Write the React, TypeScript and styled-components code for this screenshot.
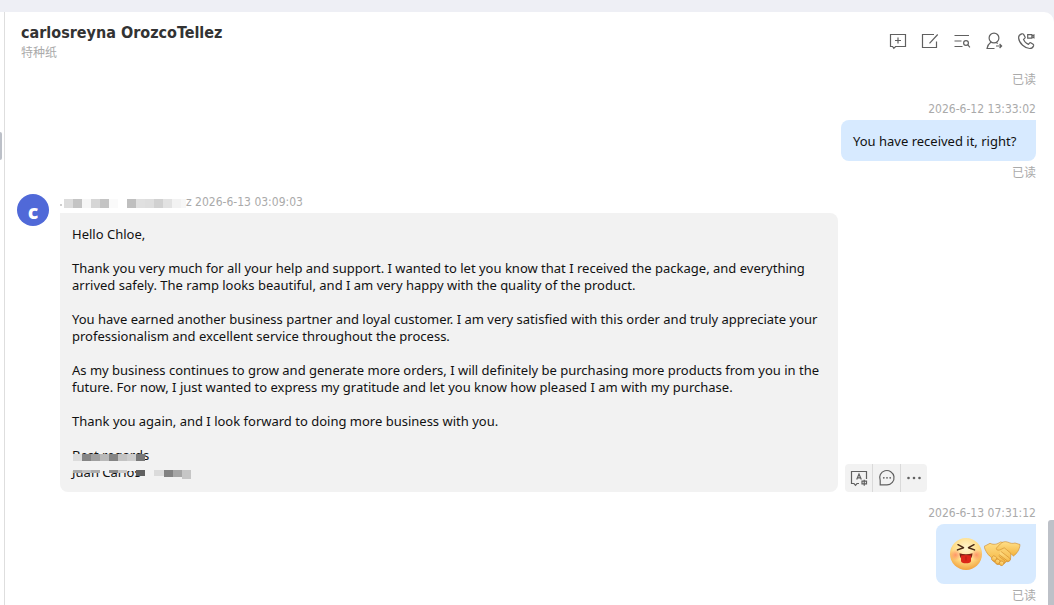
import React from "react";
import styled, { createGlobalStyle } from "styled-components";

const GlobalStyle = createGlobalStyle`
  *, *::before, *::after { box-sizing: border-box; }
  body {
    margin: 0;
    background: #eeeff5;
    font-family: "Noto Sans", "Noto Sans CJK SC", sans-serif;
    color: #111;
  }
  h1, p { margin: 0; }
  button { border: 0; padding: 0; background: none; font: inherit; color: inherit; cursor: pointer; }
`;

const Shell = styled.div`
  position: relative;
  height: 100vh;
  padding: 12px 0 0 4px;
  overflow: hidden;
`;

const SideEdge = styled.div`
  position: absolute;
  left: 0;
  top: 12px;
  bottom: 0;
  width: 4px;
  background: #fff;
`;

const SplitHandle = styled.div`
  position: absolute;
  left: 0;
  top: 132px;
  width: 2px;
  height: 28px;
  border-radius: 0 2px 2px 0;
  background: #bcc0c8;
`;

const ScrollThumb = styled.div`
  position: absolute;
  right: 0;
  top: 520px;
  bottom: 0;
  width: 6px;
  border-radius: 3px 0 0 0;
  background: #bdc1c8;
`;

const Panel = styled.main`
  height: 100%;
  display: flex;
  flex-direction: column;
  background: #fff;
  border-left: 1px solid #dedede;
  border-top-right-radius: 10px;
`;

const Header = styled.header`
  display: flex;
  justify-content: space-between;
  align-items: flex-start;
  height: 59px;
  flex: none;
  padding: 10px 18px 0 16px;
`;

const Title = styled.h1`
  font-family: "DejaVu Sans Condensed", "Noto Sans", sans-serif;
  font-size: 16px;
  line-height: 22px;
  font-weight: 700;
  color: #333;
`;

const Subtitle = styled.p`
  font-size: 12px;
  line-height: 18px;
  color: #aaa;
`;

const HeaderActions = styled.div`
  display: flex;
  gap: 12px;
  padding-top: 9px;
`;

const IconButton = styled.button`
  width: 20px;
  height: 20px;
  display: flex;
  align-items: center;
  justify-content: center;
`;

const Icon = styled.svg`
  display: block;
  fill: none;
  stroke: #606060;
  stroke-width: 1.2;
`;

const Feed = styled.section`
  flex: 1;
  padding: 0 18px 0 12px;
  display: flex;
  flex-direction: column;
`;

const Outgoing = styled.article`
  display: flex;
  flex-direction: column;
  align-items: flex-end;
  margin-top: 12px;
`;

const Stamp = styled.p`
  display: flex;
  font-family: "DejaVu Sans Condensed", "Noto Sans", sans-serif;
  font-size: 12px;
  line-height: 16px;
  color: #aaa;
`;

const OutStamp = styled(Stamp)`
  margin-bottom: 3px;
`;

const ReadMark = styled.p`
  align-self: flex-end;
  margin-top: 3px;
  font-size: 12px;
  line-height: 18px;
  color: #aaa;
`;

const FirstRead = styled(ReadMark)`
  margin-top: 0;
`;

const OutBubble = styled.div<{ $tall?: boolean }>`
  display: flex;
  min-width: ${(p) => (p.$tall ? "100px" : "195px")};
  height: ${(p) => (p.$tall ? "60px" : "41px")};
  padding: ${(p) => (p.$tall ? "12px 14px" : "13px 12px 11px")};
  border-radius: 8px 0 8px 8px;
  background: #d7eaff;
  font-size: 13px;
  line-height: 17px;
`;

const Incoming = styled.article`
  display: flex;
  gap: 11px;
  margin: 12px 0 1px;
`;

const Avatar = styled.div`
  width: 32px;
  height: 32px;
  flex: none;
  border-radius: 50%;
  background: #5069d8;
  color: #fff;
  font-size: 20px;
  line-height: 35px;
  font-weight: 800;
  text-align: center;
`;

const IncomingBody = styled.div`
  flex: 1;
  display: flex;
  flex-direction: column;
  gap: 3px;
`;

const MaskedName = styled.svg`
  display: block;
  width: 126px;
  height: 16px;
`;

const BubbleRow = styled.div`
  display: flex;
  align-items: flex-end;
  gap: 7px;
`;

const InBubble = styled.div`
  flex: 0 1 778px;
  padding: 13px 12px 11px;
  border-radius: 0 8px 8px 8px;
  background: #f2f2f2;
  font-size: 13px;
  line-height: 17px;

  p + p { margin-top: 17px; }
`;

const Signature = styled.p`
  position: relative;
`;

const SignatureMask = styled.svg`
  position: absolute;
  left: 0;
  top: 0;
  width: 130px;
  height: 34px;
`;

const MessageTools = styled.div`
  display: flex;
  border-radius: 4px;
  background: #f2f2f2;
`;

const ToolButton = styled.button`
  width: 28px;
  height: 28px;
  display: flex;
  align-items: center;
  justify-content: center;

  & + & { border-left: 1px solid #dadada; }
  &:first-child, &:last-child { width: 27px; }
`;

type Cell = [x: number, y: number, w: number, h: number, fill: string];

const nameCells: Cell[] = [
  [0, 10, 2, 2, "#cfcfcf"],
  [4, 5, 9, 9, "#dcdcdc"], [13, 5, 9, 9, "#c4c4c4"], [22, 5, 9, 9, "#f6f6f6"],
  [31, 5, 9, 9, "#d6d6d6"], [40, 5, 9, 9, "#c4c4c4"], [49, 5, 9, 9, "#fafafa"],
  [67, 5, 9, 9, "#bfbfbf"], [76, 5, 9, 9, "#e0e0e0"], [85, 5, 9, 9, "#dedede"],
  [94, 5, 9, 9, "#d1d1d1"], [103, 5, 9, 9, "#e2e2e2"], [112, 5, 9, 9, "#f2f2f2"],
  [121, 5, 5, 9, "#f7f7f7"],
];

const signatureCells: Cell[] = [
  [0, 8, 73, 9, "#f2f2f2"],
  [1, 8, 9, 7, "#dcdcdc"], [10, 8, 9, 7, "#858585"], [19, 8, 9, 7, "#9f9f9f"],
  [28, 8, 9, 7, "#b9b9b9"], [37, 8, 9, 7, "#848484"], [46, 8, 9, 7, "#c3c3c3"],
  [55, 8, 9, 7, "#cdcdcd"], [64, 8, 9, 7, "#777"],
  [0, 17, 130, 8, "#f2f2f2"],
  [1, 24, 9, 3, "#aaa"], [10, 24, 9, 3, "#c2c2c2"], [19, 24, 9, 3, "#adadad"],
  [37, 24, 9, 3, "#8b8b8b"], [46, 24, 9, 3, "#c8c8c8"], [64, 24, 9, 6, "#606060"],
  [82, 24, 10, 6, "#dbdbdb"], [92, 24, 9, 7, "#828282"], [101, 24, 9, 7, "#a5a5a5"],
  [110, 24, 9, 9, "#c6c6c6"],
];

const Cells = ({ cells }: { cells: Cell[] }) => (
  <>
    {cells.map(([x, y, w, h, fill], i) => (
      <rect key={i} x={x} y={y} width={w} height={h} fill={fill} />
    ))}
  </>
);

const AddChatIcon = () => (
  <Icon width="20" height="20" viewBox="0 0 20 20">
    <path d="M2.500 3.500h15v12H7.600L5.800 17.400 4.600 15.500H2.500zM10 6.500v6M7 9.500h6" />
  </Icon>
);
const EditIcon = () => (
  <Icon width="20" height="20" viewBox="0 0 20 20">
    <path d="M14 3.500H2.500v13h14v-6M9.500 12.300l8.200-8.800" />
  </Icon>
);
const SearchListIcon = () => (
  <Icon width="20" height="20" viewBox="0 0 20 20">
    <path d="M2.500 4.500h14.500M2.500 10h7M2.500 15.500h8" />
    <circle cx="14" cy="12" r="2.400" />
    <path d="M15.700 13.700l2.200 2.600" />
  </Icon>
);
const ForwardUserIcon = () => (
  <Icon width="20" height="20" viewBox="0 0 20 20">
    <circle cx="10" cy="7" r="4.900" />
    <path d="M7 11C5.200 12.400 3.600 14.400 3 17.500h7.500M12.300 11.300l1.300 1.300M12 15h5.500M15.600 13l2 2-2 2" />
  </Icon>
);
const CallIcon = () => (
  <Icon width="20" height="20" viewBox="0 0 20 20">
    <path d="M5.700 2.900C4 3.500 2.500 5 2.600 6.900c.2 3 1.900 5.500 4 7.400 2.200 2 4.600 3.200 7.100 3.200 1.700 0 3.300-1.200 3.900-2.800.2-.6 0-1-.5-1.400l-2-1.300c-.6-.4-1.200-.3-1.600.2l-1 1.200c-2-.7-4.200-2.900-5-5l1.200-1c.5-.4.600-1 .3-1.500L7.600 3.400c-.4-.6-1.100-.8-1.900-.5z" />
    <path d="M11.700 3.600h4.200v3.600h-4.200zM15.900 5l2-1v2.800l-2-1" />
  </Icon>
);
const TranslateIcon = () => (
  <Icon width="20" height="20" viewBox="0 0 20 20">
    <path d="M10 15.500H8l-1.500 1.800L5 15.500H2.500v-12h15V11" />
    <path d="M7.700 11.500L10 6l2.300 5.500M8.500 9.800h3M13 13.200h4.500v2.600h-4.500zM15.250 11.800v6" />
  </Icon>
);
const ReplyIcon = () => (
  <Icon width="20" height="20" viewBox="0 0 20 20">
    <path d="M3.200 16.900V12.500A7.200 7.200 0 1 1 10 16.900z" />
    <g fill="#606060" stroke="none">
      <circle cx="6.800" cy="9.800" r=".9" /><circle cx="10" cy="9.800" r=".9" /><circle cx="13.200" cy="9.800" r=".9" />
    </g>
  </Icon>
);
const MoreIcon = () => (
  <Icon width="20" height="20" viewBox="0 0 20 20">
    <g fill="#606060" stroke="none">
      <circle cx="4.500" cy="10" r="1.300" /><circle cx="10" cy="10" r="1.300" /><circle cx="15.500" cy="10" r="1.300" />
    </g>
  </Icon>
);

const TongueFace = () => (
  <svg width="34" height="36" viewBox="0 0 34 36" role="img" aria-label="Laughing face with tongue">
    <defs>
      <radialGradient id="face" cx="50%" cy="32%" r="68%">
        <stop offset="0" stopColor="#fff6cf" />
        <stop offset=".6" stopColor="#ffdc85" />
        <stop offset="1" stopColor="#f2a13c" />
      </radialGradient>
      <radialGradient id="cheek">
        <stop offset="0" stopColor="#ff7d5c" stopOpacity=".75" />
        <stop offset="1" stopColor="#ff7d5c" stopOpacity="0" />
      </radialGradient>
    </defs>
    <circle cx="16" cy="18" r="16" fill="url(#face)" />
    <circle cx="5.500" cy="19" r="5.500" fill="url(#cheek)" />
    <circle cx="26.500" cy="19" r="5.500" fill="url(#cheek)" />
    <g fill="none" stroke="#4b2a14" strokeWidth="1.500" strokeLinecap="round" strokeLinejoin="round">
      <path d="M8 8.700l5.500 3-6 2.200M24 8.700l-5.500 3 6 2.200" />
    </g>
    <path d="M9.500 17.300c4 1.200 9 1.200 13 0-.2 2.700-.9 4.700-2 5.700h-9c-1.100-1-1.800-3-2-5.700z" fill="#7c2312" />
    <path d="M11 19.500c3-.8 7-.8 10 0v5.500c0 1.800-2.200 2.300-5 2.300s-5-.5-5-2.300z" fill="#dc2618" />
    <path d="M16 20.500v4" stroke="#b01f14" strokeWidth="1" />
  </svg>
);

const Handshake = () => (
  <svg width="38" height="36" viewBox="0 0 38 36" role="img" aria-label="Handshake">
    <defs>
      <linearGradient id="hand" x1="0" y1="0" x2="0" y2="1">
        <stop offset="0" stopColor="#ffe08a" />
        <stop offset="1" stopColor="#f3b23c" />
      </linearGradient>
    </defs>
    <g fill="url(#hand)" stroke="#cf8828" strokeWidth=".6" strokeLinejoin="round">
      <path d="M0 10.500L6 7.300c4 1.800 7 1 10.500-1.300 4 .2 7 2.800 11 6l-1 11c-.5 2.500-3 3.200-4.500 2.500-1 2.600-4 3.300-5.500 1.800-1.500 2-4.500 1.500-5-1-2.500-.2-3-2-2.500-4-3-1.500-6.500-4.300-9-11.800z" />
      <path d="M36 8.500l-5-1.500c-2.500.8-4.500.3-7-.8-3-1.200-5.500-.4-7.800 1.800l-3.700 4c-.8 1.700 1.500 2.800 3.700 1.800l4-2c3.500 2.600 6.800 5.600 9.300 8.400 3.300-3 6-5.700 6.500-11.700z" />
      <path d="M17 15.500l8.500 6.500c2 1.700-.3 4.200-2.300 2.800L15 18.500M14.500 20l6 4.500c1.600 1.600-.3 3.500-2 2.400L13 22.500" />
      <rect x="8" y="20.500" width="4.800" height="5" rx="2.300" transform="rotate(32 11 22)" />
      <rect x="11.500" y="23.300" width="4.800" height="5" rx="2.300" transform="rotate(32 14 25)" />
      <rect x="15.500" y="25.300" width="4.500" height="4.500" rx="2.200" transform="rotate(32 18 27)" />
    </g>
  </svg>
);

export default function App() {
  return (
    <>
      <GlobalStyle />
      <Shell>
        <SideEdge />
        <SplitHandle />
        <Panel>
          <Header>
            <div>
              <Title>carlosreyna OrozcoTellez</Title>
              <Subtitle>特种纸</Subtitle>
            </div>
            <HeaderActions>
              <IconButton aria-label="New chat"><AddChatIcon /></IconButton>
              <IconButton aria-label="Edit note"><EditIcon /></IconButton>
              <IconButton aria-label="Search history"><SearchListIcon /></IconButton>
              <IconButton aria-label="Transfer contact"><ForwardUserIcon /></IconButton>
              <IconButton aria-label="Call"><CallIcon /></IconButton>
            </HeaderActions>
          </Header>
          <Feed>
            <FirstRead>已读</FirstRead>
            <Outgoing>
              <OutStamp>2026-6-12 13:33:02</OutStamp>
              <OutBubble>You have received it, right?</OutBubble>
              <ReadMark>已读</ReadMark>
            </Outgoing>
            <Incoming>
              <Avatar>c</Avatar>
              <IncomingBody>
                <Stamp>
                  <MaskedName aria-hidden="true"><Cells cells={nameCells} /></MaskedName>
                  z 2026-6-13 03:09:03
                </Stamp>
                <BubbleRow>
                  <InBubble>
                    <p>Hello Chloe,</p>
                    <p>
                      Thank you very much for all your help and support. I wanted to let you know that I
                      received the package, and everything arrived safely. The ramp looks beautiful, and I am
                      very happy with the quality of the product.
                    </p>
                    <p>
                      You have earned another business partner and loyal customer. I am very satisfied with
                      this order and truly appreciate your professionalism and excellent service throughout
                      the process.
                    </p>
                    <p>
                      As my business continues to grow and generate more orders, I will definitely be
                      purchasing more products from you in the future. For now, I just wanted to express my
                      gratitude and let you know how pleased I am with my purchase.
                    </p>
                    <p>Thank you again, and I look forward to doing more business with you.</p>
                    <Signature>
                      Best regards
                      <br />
                      Juan Carlos
                      <SignatureMask viewBox="0 1 130 34" aria-hidden="true"><Cells cells={signatureCells} /></SignatureMask>
                    </Signature>
                  </InBubble>
                  <MessageTools>
                    <ToolButton aria-label="Translate"><TranslateIcon /></ToolButton>
                    <ToolButton aria-label="Reply"><ReplyIcon /></ToolButton>
                    <ToolButton aria-label="More"><MoreIcon /></ToolButton>
                  </MessageTools>
                </BubbleRow>
              </IncomingBody>
            </Incoming>
            <Outgoing>
              <OutStamp>2026-6-13 07:31:12</OutStamp>
              <OutBubble $tall>
                <TongueFace />
                <Handshake />
              </OutBubble>
              <ReadMark>已读</ReadMark>
            </Outgoing>
          </Feed>
        </Panel>
        <ScrollThumb />
      </Shell>
    </>
  );
}
